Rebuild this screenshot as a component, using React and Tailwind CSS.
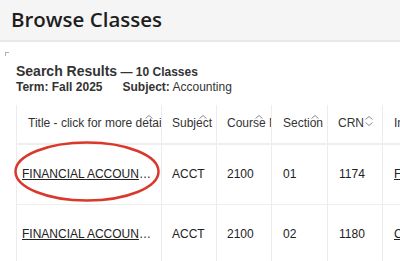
import React from "react";

const Caret = ({ down = false }) => (
  <svg width="8" height="4" viewBox="0 0 8 4" className="block">
    {down ? (
      <polyline points="0.5,0.5 4,3.5 7.5,0.5" fill="none" stroke="#8a8a8a" strokeWidth="1" />
    ) : (
      <polyline points="0.5,3.5 4,0.5 7.5,3.5" fill="none" stroke="#8a8a8a" strokeWidth="1" />
    )}
  </svg>
);

const rows = [
  { title: "FINANCIAL ACCOUNTING", subject: "ACCT", course: "2100", section: "01", crn: "1174", instr: "Fulton, Mary" },
  { title: "FINANCIAL ACCOUNTING", subject: "ACCT", course: "2100", section: "02", crn: "1180", instr: "Carter, John" },
];

export default function App() {
  return (
    <div className="relative w-[400px] h-[261px] overflow-hidden bg-white font-['Liberation_Sans',Arial,sans-serif] text-[#222]">
      <div className="h-[42px] bg-[#f5f5f5] border-b-2 border-[#e8e8e8] pl-[11px] pb-[3px] flex items-center">
        <h1 className="font-['Open_Sans',sans-serif] font-semibold text-[20.5px] leading-[28px] text-[#1e1e1e]">
          Browse Classes
        </h1>
      </div>
      <div className="h-[21px] pl-[5px] pt-[10px]">
        <div className="w-[4px] h-[4px] border-l border-t border-[#b0b0b0]"></div>
      </div>
      <div className="pl-[16px]">
        <div className="leading-[15px] whitespace-nowrap">
          <span className="font-bold text-[14px] text-[#333]">Search Results</span>
          <span className="font-bold text-[12px] text-[#333]"> — 10 Classes</span>
        </div>
        <div className="leading-[14px] text-[12px] text-[#333] whitespace-nowrap">
          <span className="font-bold">Term: Fall 2025</span>
          <span className="inline-block w-[20px]"></span>
          <span className="font-bold">Subject:</span> Accounting
        </div>
      </div>
      <div className="pl-[16px] mt-[11px]">
        <table className="table-fixed border-collapse text-[12px] w-[500px]">
          <colgroup>
            <col className="w-[145px]" />
            <col className="w-[55px]" />
            <col className="w-[55px]" />
            <col className="w-[56px]" />
            <col className="w-[55px]" />
            <col className="w-[134px]" />
          </colgroup>
          <thead>
            <tr className="h-[39px] border-b-2 border-[#eeeeee]">
              <th className="relative border-l border-r border-[#ececec] font-normal text-left text-[#333] pl-[11px] pr-0 pb-[3px] overflow-hidden whitespace-nowrap">
                <span className="absolute left-[128px] top-[10px]"><Caret /></span>
                Title - click for more details
              </th>
              <th className="relative border-r border-[#ececec] font-normal text-left text-[#333] pl-[10px] pb-[3px] overflow-hidden whitespace-nowrap">
                <span className="absolute left-[37px] top-[10px]"><Caret /></span>
                Subject
              </th>
              <th className="relative border-r border-[#ececec] font-normal text-left text-[#333] pl-[10px] pb-[3px] overflow-hidden whitespace-nowrap">
                <span className="absolute left-[38px] top-[10px]"><Caret /></span>
                Course Number
              </th>
              <th className="relative border-r border-[#ececec] font-normal text-left text-[#333] pl-[11px] pb-[3px] overflow-hidden whitespace-nowrap">
                <span className="absolute left-[39px] top-[10px]"><Caret /></span>
                Section
              </th>
              <th className="relative border-r border-[#ececec] font-normal text-left text-[#333] pl-[10px] pb-[3px] overflow-hidden whitespace-nowrap">
                <span className="inline-flex items-center">
                  CRN
                  <span className="flex flex-col gap-[2px] ml-[1px] -mt-[3px]">
                    <Caret />
                    <Caret down />
                  </span>
                </span>
              </th>
              <th className="border-r border-[#ececec] font-normal text-left text-[#333] pl-[11px] pb-[3px] overflow-hidden whitespace-nowrap">
                Instructor
              </th>
            </tr>
          </thead>
          <tbody>
            {rows.map((r, i) => (
              <tr key={i} className="h-[60px] border-b border-[#eeeeee]">
                <td className="border-l border-r border-[#ececec] pl-[5px] pr-[6px]">
                  <div className="overflow-hidden text-ellipsis whitespace-nowrap">
                    <span className="underline text-[#222]">{r.title}</span>
                  </div>
                </td>
                <td className="border-r border-[#ececec] pl-[10px] whitespace-nowrap overflow-hidden">{r.subject}</td>
                <td className="border-r border-[#ececec] pl-[10px] whitespace-nowrap overflow-hidden">{r.course}</td>
                <td className="border-r border-[#ececec] pl-[11px] whitespace-nowrap overflow-hidden">{r.section}</td>
                <td className="border-r border-[#ececec] pl-[11px] whitespace-nowrap overflow-hidden">{r.crn}</td>
                <td className="border-r border-[#ececec] pl-[11px] whitespace-nowrap overflow-hidden">
                  <span className="underline">{r.instr}</span>
                </td>
              </tr>
            ))}
          </tbody>
        </table>
      </div>
      <svg className="absolute left-0 top-0 pointer-events-none" width="400" height="261">
        <ellipse cx="87" cy="171.5" rx="71.5" ry="29" fill="none" stroke="#d9382b" strokeWidth="2.5" />
      </svg>
    </div>
  );
}
